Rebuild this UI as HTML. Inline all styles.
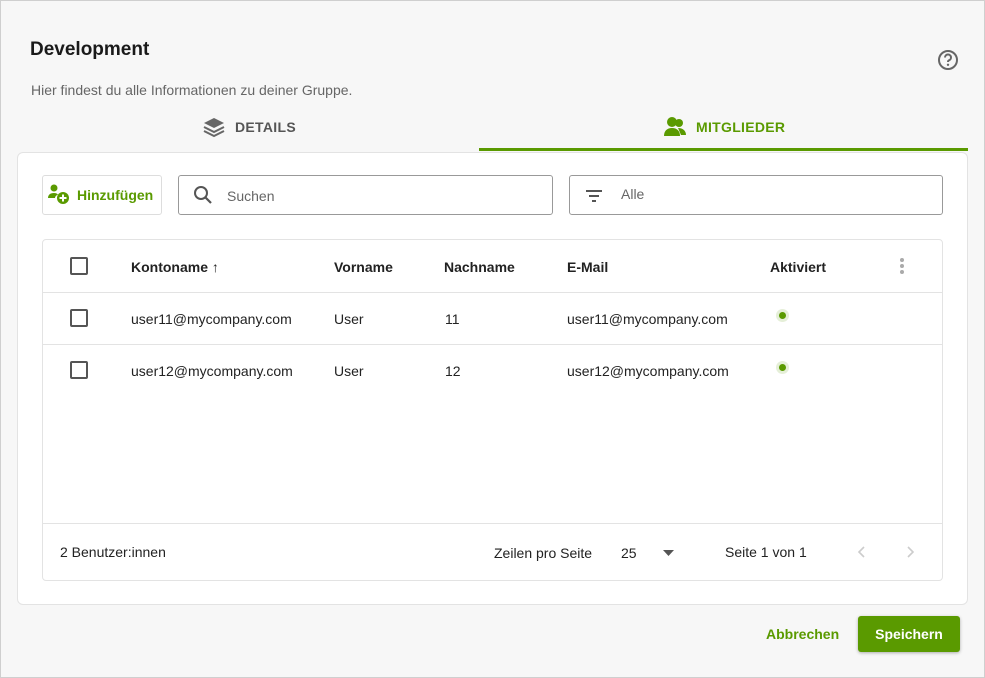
<!DOCTYPE html>
<html><head><meta charset="utf-8"><style>
*{box-sizing:border-box;margin:0;padding:0}
body{width:985px;height:678px;background:#f7f7f7;font-family:"Liberation Sans",sans-serif;color:#222;position:relative;overflow:hidden}
body::before{content:"";position:absolute;left:0;top:0;width:985px;height:678px;border:1px solid #cfcfcf;box-sizing:border-box}
.abs{position:absolute}
h1{position:absolute;left:30px;top:39px;font-size:19px;font-weight:bold;color:#1a1a1a}
.sub{left:31px;top:82px;font-size:14px;color:#666}
.tab{top:116px;font-size:14px;font-weight:bold;display:flex;align-items:center;gap:9px;letter-spacing:.3px}
.card{left:17px;top:152px;width:951px;height:453px;background:#fff;border:1px solid #e3e3e3;border-radius:6px}
.inp{border:1px solid #999;border-radius:3px;height:40px;background:#fff}
.table{left:42px;top:239px;width:901px;height:342px;border:1px solid #e3e3e3;border-radius:4px;background:#fff}
.row{position:absolute;left:0;width:899px;border-bottom:1px solid #e3e3e3}
.cb{position:absolute;left:27px;width:18px;height:18px;border:2px solid #555;border-radius:2px}
.c{position:absolute;font-size:14px;color:#222}
.hd{font-weight:bold}
.dot{position:absolute;left:733px;width:13px;height:13px;border-radius:50%;background:#e5efd8}
.dot::after{content:"";position:absolute;left:3px;top:3px;width:7px;height:7px;border-radius:50%;background:#5a9a00}
</style></head><body>
<h1>Development</h1>
<svg class="abs" style="left:937px;top:49px" width="22" height="22" viewBox="0 0 22 22"><circle cx="11" cy="11" r="9" fill="none" stroke="#666" stroke-width="2"/><path d="M8 8.5a3 3 0 1 1 4 2.8c-.8.4-1 .9-1 1.7" fill="none" stroke="#666" stroke-width="2"/><circle cx="11" cy="15.8" r="1.2" fill="#666"/></svg>
<div class="abs sub">Hier findest du alle Informationen zu deiner Gruppe.</div>
<div class="abs tab" style="left:202px;color:#555"><svg width="24" height="22" viewBox="0 0 24 22"><path d="M12 2 22 7 12 12 2 7Z" fill="#666"/><path d="M2 11l10 5 10-5M2 15l10 5 10-5" fill="none" stroke="#666" stroke-width="2"/></svg>DETAILS</div>
<div class="abs tab" style="left:663px;color:#5a9a00"><svg width="24" height="22" viewBox="0 0 24 22"><circle cx="9" cy="6" r="5" fill="#5a9a00"/><path d="M1 20c0-5 3-8 8-8s8 3 8 8Z" fill="#5a9a00"/><circle cx="16" cy="7" r="4" fill="#5a9a00"/><path d="M15 12c5 0 8 3 8 7h-5" fill="#5a9a00"/></svg>MITGLIEDER</div>
<div class="abs" style="left:479px;top:148px;width:489px;height:3px;background:#5a9a00"></div>
<div class="abs card"></div>
<div class="abs" style="left:42px;top:175px;width:120px;height:40px;border:1px solid #ddd;border-radius:3px;background:#fff;display:flex;align-items:center;gap:6px;padding-left:4px;color:#5a9a00;font-weight:bold;font-size:14px"><svg width="24" height="24" viewBox="0 0 24 24"><circle cx="7" cy="5" r="3.5" fill="#5a9a00"/><path d="M1 15c0-3 2-5 6-5 2 0 3 .5 4 1.5-2 1-3 2-3 3.5Z" fill="#5a9a00"/><circle cx="16" cy="15" r="6" fill="#5a9a00"/><path d="M16 11.5v7M12.5 15h7" stroke="#fff" stroke-width="2"/></svg>Hinzufügen</div>
<div class="abs inp" style="left:178px;top:175px;width:375px"><svg class="abs" style="left:14px;top:9px" width="20" height="20" viewBox="0 0 20 20"><circle cx="8" cy="8" r="6" fill="none" stroke="#555" stroke-width="2"/><path d="M12.5 12.5 18 18" stroke="#555" stroke-width="2.2"/></svg><span class="abs" style="left:48px;top:12px;font-size:14px;color:#666">Suchen</span></div>
<div class="abs inp" style="left:569px;top:175px;width:374px"><svg class="abs" style="left:14px;top:11px" width="20" height="18" viewBox="0 0 20 18"><path d="M2 4h16M5 9h10M8 14h4" stroke="#555" stroke-width="2"/></svg><span class="abs" style="left:51px;top:10px;font-size:14px;color:#666">Alle</span></div>
<div class="abs table">
<div class="row" style="top:0;height:53px"><div class="cb" style="top:17px"></div>
<span class="c hd" style="left:88px;top:19px">Kontoname ↑</span><span class="c hd" style="left:291px;top:19px">Vorname</span><span class="c hd" style="left:401px;top:19px">Nachname</span><span class="c hd" style="left:524px;top:19px">E-Mail</span><span class="c hd" style="left:727px;top:19px">Aktiviert</span>
<svg class="abs" style="left:856px;top:17px" width="6" height="18"><circle cx="3" cy="3" r="2" fill="#aaa"/><circle cx="3" cy="9" r="2" fill="#aaa"/><circle cx="3" cy="15" r="2" fill="#aaa"/></svg></div>
<div class="row" style="top:53px;height:52px"><div class="cb" style="top:16px"></div><span class="c" style="left:88px;top:18px">user11@mycompany.com</span><span class="c" style="left:291px;top:18px">User</span><span class="c" style="left:402px;top:18px">11</span><span class="c" style="left:524px;top:18px">user11@mycompany.com</span><div class="dot" style="top:16px"></div></div>
<div class="row" style="top:105px;height:52px;border:none"><div class="cb" style="top:16px"></div><span class="c" style="left:88px;top:18px">user12@mycompany.com</span><span class="c" style="left:291px;top:18px">User</span><span class="c" style="left:402px;top:18px">12</span><span class="c" style="left:524px;top:18px">user12@mycompany.com</span><div class="dot" style="top:16px"></div></div>
<div class="row" style="top:283px;height:0"></div>
<span class="c" style="left:17px;top:304px">2 Benutzer:innen</span>
<span class="c" style="left:451px;top:305px">Zeilen pro Seite</span>
<span class="c" style="left:578px;top:305px">25</span>
<svg class="abs" style="left:620px;top:309px" width="12" height="8"><path d="M0 1h11L5.5 7Z" fill="#555"/></svg>
<span class="c" style="left:682px;top:304px">Seite 1 von 1</span>
<svg class="abs" style="left:814px;top:305px" width="10" height="14"><path d="M7 2 2 7l5 5" fill="none" stroke="#ccc" stroke-width="1.6"/></svg>
<svg class="abs" style="left:862px;top:305px" width="10" height="14"><path d="M3 2l5 5-5 5" fill="none" stroke="#ccc" stroke-width="1.6"/></svg>
</div>
<div class="abs" style="left:766px;top:626px;font-size:14px;font-weight:bold;color:#5a9a00">Abbrechen</div>
<div class="abs" style="left:858px;top:616px;width:102px;height:36px;background:#5a9a00;border-radius:3px;color:#fff;font-weight:bold;font-size:14px;text-align:center;line-height:36px;box-shadow:0 1px 3px rgba(0,0,0,.3)">Speichern</div>
</body></html>
